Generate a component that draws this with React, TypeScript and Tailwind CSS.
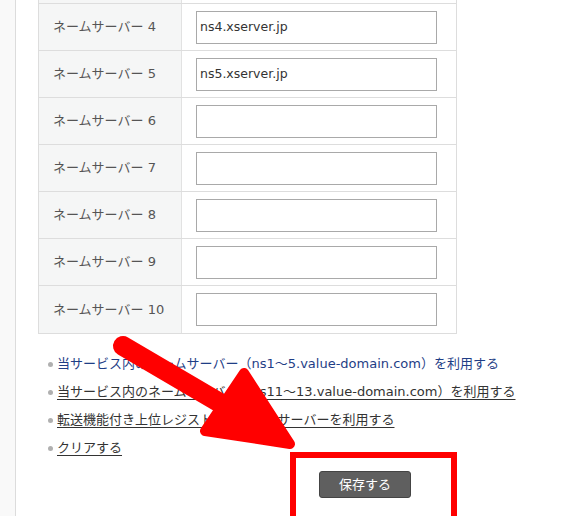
import React from "react";

const font = { fontFamily: '"DejaVu Sans", "Noto Sans CJK JP", sans-serif' };

const rows: { n: number; v: string }[] = [
  { n: 4, v: "ns4.xserver.jp" },
  { n: 5, v: "ns5.xserver.jp" },
  { n: 6, v: "" },
  { n: 7, v: "" },
  { n: 8, v: "" },
  { n: 9, v: "" },
  { n: 10, v: "" },
];

const links = [
  { t: "当サービス内のネームサーバー（ns1～5.value-domain.com）を利用する", blue: true },
  { t: "当サービス内のネームサーバー（ns11～13.value-domain.com）を利用する", blue: false },
  { t: "転送機能付き上位レジストラのネームサーバーを利用する", blue: false },
  { t: "クリアする", blue: false },
];

export default function App() {
  return (
    <div className="relative w-[582px] h-[516px] overflow-hidden bg-white flex" style={font}>
      <div className="w-[16px] shrink-0 bg-[#f9f9f9] border-r border-[#dcdcdc]" />
      <div className="flex-1 pl-[22px]">
        <div className="w-[419px] border-x border-[#dddddd]">
          <div className="flex h-[3px]">
            <div className="w-[143px] bg-[#f5f6f6] border-r border-[#e2e2e2]" />
            <div className="flex-1" />
          </div>
          {rows.map((r, i) => (
            <div
              key={r.n}
              className={`flex h-[47px] border-t border-[#dddddd] ${i === rows.length - 1 ? "box-content border-b" : ""}`}
            >
              <div className="w-[143px] bg-[#f5f6f6] border-r border-[#e2e2e2] flex items-center pl-[14px] text-[13px] text-[#555]">
                ネームサーバー {r.n}
              </div>
              <div className="flex-1 flex items-center pl-[14px]">
                <div className="w-[241px] h-[33px] border border-[#a9a9a9] bg-white flex items-center pl-[3px] text-[12.5px] text-[#333]">
                  {r.v}
                </div>
              </div>
            </div>
          ))}
        </div>
        <ul className="mt-[16px] pl-[10px]">
          {links.map((l) => (
            <li key={l.t} className="flex items-center h-[28px] text-[13px]">
              <span className="w-[5px] h-[5px] rounded-full bg-[#b0b0b0] mr-[4px]" />
              <span
                className={
                  l.blue
                    ? "text-[#1f3e86]"
                    : "text-[#333] underline underline-offset-[3px] decoration-[#333]"
                }
              >
                {l.t}
              </span>
            </li>
          ))}
        </ul>
        <div className="mt-[9px] pl-[281px]">
          <div className="w-[92px] h-[27px] rounded-[3px] bg-[#5f5f5f] border border-[#444] flex items-center justify-center text-white text-[13px]">
            保存する
          </div>
        </div>
      </div>
      <div className="absolute left-[290px] top-[452px] w-[167px] h-[80px] border-[6px] border-[#ff0000] pointer-events-none" />
      <svg className="absolute left-0 top-0 pointer-events-none" width="582" height="516">
        <line x1="123" y1="346" x2="232" y2="410" stroke="#ff0000" strokeWidth="20" strokeLinecap="round" />
        <polygon
          points="244,373 205,431 290,444"
          fill="#ff0000"
          stroke="#ff0000"
          strokeWidth="10"
          strokeLinejoin="round"
        />
      </svg>
    </div>
  );
}
